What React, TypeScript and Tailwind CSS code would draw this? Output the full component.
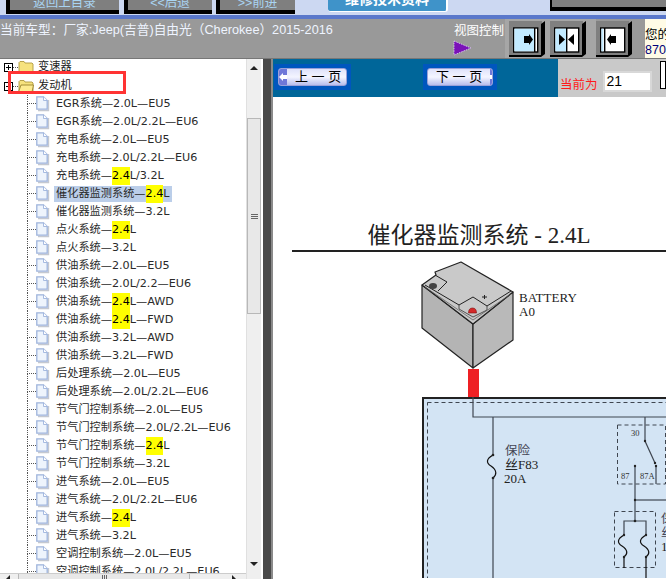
const cjk = { fontFamily: '"DejaVu Sans", "Noto Sans CJK SC", sans-serif' }
const arial = { fontFamily: '"Liberation Sans", "Noto Sans CJK SC", sans-serif' }

const rows = [
  'EGR系统—2.0L—EU5',
  'EGR系统—2.0L/2.2L—EU6',
  '充电系统—2.0L—EU5',
  '充电系统—2.0L/2.2L—EU6',
  '充电系统—2.4L/3.2L',
  '催化器监测系统—2.4L',
  '催化器监测系统—3.2L',
  '点火系统—2.4L',
  '点火系统—3.2L',
  '供油系统—2.0L—EU5',
  '供油系统—2.0L/2.2—EU6',
  '供油系统—2.4L—AWD',
  '供油系统—2.4L—FWD',
  '供油系统—3.2L—AWD',
  '供油系统—3.2L—FWD',
  '后处理系统—2.0L—EU5',
  '后处理系统—2.0L/2.2L—EU6',
  '节气门控制系统—2.0L—EU5',
  '节气门控制系统—2.0L/2.2L—EU6',
  '节气门控制系统—2.4L',
  '节气门控制系统—3.2L',
  '进气系统—2.0L—EU5',
  '进气系统—2.0L/2.2L—EU6',
  '进气系统—2.4L',
  '进气系统—3.2L',
  '空调控制系统—2.0L—EU5',
  '空调控制系统—2.0L/2.2L—EU6',
]

function TopButton({ label, width, ml }: { label: string; width: string; ml: string }) {
  return (
    <div className={`${width} ${ml} h-[14px] bg-[#7f7f7f] border-l-4 border-b-4 border-black overflow-hidden flex items-end justify-center`}>
      <span className="text-[12.5px] leading-[13px] text-[#a9d4f2] whitespace-nowrap" style={arial}>{label}</span>
    </div>
  )
}

function ViewButton({ blue, bar, children }: { blue: number; bar: number; children: React.ReactNode }) {
  return (
    <svg width="36" height="36" viewBox="0 0 36 36" className="shrink-0">
      <rect x="0" y="0" width="33" height="34" fill="#808080" />
      <polygon points="32,3 36,0 36,33 32,36 0,36 0,34 32,34" fill="#000" />
      <rect x="4.700" y="7" width="24" height="24" fill="#fff" stroke="#000" strokeWidth="1.400" />
      <rect x="5.400" y="7.700" width={blue} height="22.600" fill="#c2eaff" />
      <rect x={bar} y="7" width="1.400" height="24" fill="#000" />
      {children}
    </svg>
  )
}

function Folder({ open }: { open?: boolean }) {
  return (
    <svg width="16" height="13" viewBox="0 0 16 13" className="shrink-0">
      <path d="M1 3 L1 1.500 L2 .5 L6 .5 L7 2 L14 2 L15 3 L15 12 L1 12 Z" fill="#f6e27e" stroke="#b09a40" strokeWidth=".9" />
      {open && <path d="M.5 12 L3 5 L15.500 5 L14 12 Z" fill="#fdeb90" stroke="#9a8530" strokeWidth=".9" />}
    </svg>
  )
}

function DocIcon() {
  return (
    <svg width="14" height="16" viewBox="0 0 14 16" className="shrink-0">
      <path d="M2 14.500 L12.500 14.500 L12.500 4" fill="none" stroke="#c4c8d0" strokeWidth="1.400" />
      <path d="M.8 .8 L7.500 .8 L11.200 4.500 L11.200 13.200 L.8 13.200 Z" fill="#eef4fc" stroke="#9db3dc" strokeWidth="1.300" />
      <path d="M7.500 .8 L7.500 4.500 L11.200 4.500" fill="#ffffff" stroke="#9db3dc" strokeWidth=".9" />
    </svg>
  )
}

function RowLabel({ text, selected }: { text: string; selected: boolean }) {
  const i = text.indexOf('2.4')
  return (
    <div className={`h-[16px] flex items-center px-[2px] ml-[4px] whitespace-nowrap text-[11.2px] text-[#2a2a2a] ${selected ? 'bg-[#bbcee9]' : ''}`} style={cjk}>
      {i < 0 ? text : (
        <>
          {text.slice(0, i)}
          <span className="bg-[#ffff00] text-black h-[18px] leading-[18px]">2.4</span>
          {text.slice(i + 3)}
        </>
      )}
    </div>
  )
}

function Tree() {
  return (
    <div className="flex-1 min-w-0 overflow-hidden -mt-[1px]">
      <div className="h-[19px] flex items-center pl-[4px]">
        <div className="w-[9px] h-[9px] border border-black flex items-center justify-center text-[9px] leading-none bg-white">
          <div className="w-[5px] h-[1px] bg-black relative">
            <div className="w-[1px] h-[5px] bg-black absolute left-[2px] -top-[2px]" />
          </div>
        </div>
        <div className="w-[5px] border-t border-dotted border-[#555]" />
        <Folder />
        <span className="ml-[4px] text-[11.2px] text-[#222]" style={cjk}>变速器</span>
      </div>
      <div className="h-[18px] flex items-center pl-[4px]">
        <div className="w-[9px] h-[9px] border border-black flex items-center justify-center bg-white">
          <div className="w-[5px] h-[1px] bg-black" />
        </div>
        <div className="w-[5px] border-t border-dotted border-[#555]" />
        <Folder open />
        <span className="ml-[4px] text-[11.2px] text-[#222]" style={cjk}>发动机</span>
      </div>
      {rows.map((r, n) => (
        <div key={n} className="h-[18px] flex items-center pl-[27px]">
          <div className="w-[9px] h-[18px] flex flex-col shrink-0">
            <div className="h-[9px] border-l border-b border-dotted border-[#555]" />
            <div className="h-[9px] border-l border-dotted border-[#555]" />
          </div>
          <DocIcon />
          <RowLabel text={r} selected={n === 5} />
        </div>
      ))}
    </div>
  )
}

function TreeScrollbars() {
  return (
    <div className="w-[15px] shrink-0 mr-[2px] bg-[#efefef] flex flex-col items-center border-l border-[#e0e0e0]">
      <div className="h-[15px] pt-[7px]">
        <div className="w-0 h-0 border-x-[4px] border-x-transparent border-b-[4px] border-b-[#222]" />
      </div>
      <div className="mt-[44px] w-[14px] h-[196px] bg-[#e8e8e8] border border-[#b8b8b8] flex flex-col items-center justify-center gap-[1px]">
        <div className="w-[7px] h-[1px] bg-[#666]" />
        <div className="w-[7px] h-[1px] bg-[#666]" />
        <div className="w-[7px] h-[1px] bg-[#666]" />
      </div>
      <div className="flex-1" />
      <div className="h-[17px]">
        <div className="w-0 h-0 border-x-[4px] border-x-transparent border-t-[4px] border-t-[#222]" />
      </div>
    </div>
  )
}

function PageButton({ label, dir }: { label: string; dir: 'prev' | 'next' }) {
  const arrow = (
    <div className="w-[10px] self-stretch bg-[#6f78d8] flex items-center justify-center text-white text-[9px]">
      <svg width="8" height="8" viewBox="0 0 8 8">
        <path d={dir === 'prev' ? 'M0 4 L4 0 L4 2 L8 2 L8 6 L4 6 L4 8 Z' : 'M8 4 L4 0 L4 2 L0 2 L0 6 L4 6 L4 8 Z'} fill="#fff" />
      </svg>
    </div>
  )
  return (
    <div className="h-[26px] px-[4px] py-[4px] bg-[#0056be] flex">
      <div className="flex-1 rounded-[3px] border border-[#9aa0d8] overflow-hidden flex items-center bg-gradient-to-b from-[#dfe2fa] via-[#f4f5ff] to-[#b9bdec]">
        {dir === 'prev' && arrow}
        <span className="flex-1 text-center text-[13px] text-black whitespace-nowrap px-[8px]" style={arial}>{label}</span>
        {dir === 'next' && arrow}
      </div>
    </div>
  )
}

function Circuit() {
  const stroke = '#3f4650'
  const dash = { stroke: '#3f4650', strokeWidth: 1, strokeDasharray: '4 3', fill: 'none' }
  const serif = '"Liberation Serif", "Noto Sans CJK SC", serif'
  return (
    <svg width="374" height="326" viewBox="292 253 374 326" className="block">
      {/* battery */}
      <polygon points="422,286 473,325 473,369 422,329" fill="#b4b4b4" stroke="#222" strokeWidth="1.200" strokeLinejoin="round" />
      <polygon points="513,293 473,325 473,369 513,341" fill="#b9b9b9" stroke="#222" strokeWidth="1.200" strokeLinejoin="round" />
      <polygon points="422,286 436,276 435,273 461,263 513,293 473,325" fill="#c9c9c9" stroke="#222" strokeWidth="1.200" strokeLinejoin="round" />
      <path d="M425,286 L459,306 L473,298 L487,307 L511,292" fill="none" stroke="#222" strokeWidth="1" />
      <path d="M459,306 L459,310 L473,318 L487,311 L487,307" fill="none" stroke="#444" strokeWidth=".9" />
      <path d="M425,288 L473,321 L511,295" fill="none" stroke="#555" strokeWidth=".7" />
      <path d="M435,276 L447,283 L438,292" fill="none" stroke="#222" strokeWidth="1" />
      <ellipse cx="433" cy="287" rx="4" ry="3" fill="#444" />
      <path d="M468.500,314 Q468.500,309 472.500,309 Q476.500,309 476.500,314 Z" fill="#d42a2a" stroke="#7a1010" strokeWidth=".6" />
      <path d="M482,298 L487,298 M484.500,296 L484.500,300" stroke="#222" strokeWidth="1" />
      <text x="519" y="303" fontFamily={serif} fontSize="13" fill="#222">BATTERY</text>
      <text x="519" y="317" fontFamily={serif} fontSize="13" fill="#222">A0</text>
      <rect x="468" y="370" width="11" height="28" fill="#ee2024" />

      {/* module box */}
      <rect x="423" y="399" width="260" height="200" fill="#d3e4f4" stroke="#222" strokeWidth="2" />
      <rect x="427.500" y="403.500" width="260" height="200" {...dash} />
      <path d="M473,398 L473,418 L666,418" fill="none" stroke={stroke} strokeWidth="1.200" />

      {/* fuse F83 */}
      <path d="M493,418 L493,456" fill="none" stroke={stroke} strokeWidth="1.200" />
      <path d="M493,456 C486,460 486,464 491,467 C497,471 497,476 493,479" fill="none" stroke="#111" strokeWidth="1.200" />
      <path d="M493,479 L493,579" fill="none" stroke={stroke} strokeWidth="1.200" />
      <circle cx="493" cy="456" r="1.300" fill="#222" />
      <circle cx="493" cy="479" r="1.300" fill="#222" />
      <text x="505" y="456" fontFamily={serif} fontSize="12.500" fill="#445">保险</text>
      <text x="505" y="470" fontFamily={serif} fontSize="13" fill="#222">丝F83</text>
      <text x="504" y="484" fontFamily={serif} fontSize="13" fill="#222">20A</text>

      {/* relay */}
      <rect x="617.500" y="426" width="48" height="59" {...dash} />
      <text x="631" y="437" fontFamily={serif} fontSize="8.500" fill="#333">30</text>
      <text x="621" y="480" fontFamily={serif} fontSize="8.500" fill="#333">87</text>
      <text x="640" y="480" fontFamily={serif} fontSize="8.500" fill="#333">87A</text>
      <path d="M645,418 L645,442 L655,464" fill="none" stroke={stroke} strokeWidth="1.200" />
      <path d="M656,467 L656,485" fill="none" stroke={stroke} strokeWidth="1.200" />
      <circle cx="645" cy="442" r="1.200" fill="#222" />
      <circle cx="655" cy="464" r="1.200" fill="#222" />
      <circle cx="656" cy="467" r="1.200" fill="#222" />
      <path d="M635,467 L635,522" fill="none" stroke={stroke} strokeWidth="1.200" />
      <circle cx="635" cy="467" r="1.200" fill="#222" />
      <path d="M635,501 L666,501" fill="none" stroke={stroke} strokeWidth="1.200" />
      <circle cx="635" cy="501" r="1.200" fill="#222" />

      {/* twin fuses */}
      <rect x="614.500" y="512.500" width="41" height="56" {...dash} />
      <path d="M624,536 L624,522 L646,522 L646,536" fill="none" stroke={stroke} strokeWidth="1.200" />
      <circle cx="635" cy="522" r="1.300" fill="#222" />
      <path d="M624,536 C617,540 617,544 622,547 C628,551 628,555 624,558 L624,569" fill="none" stroke="#111" strokeWidth="1.200" />
      <path d="M646,536 C639,540 639,544 644,547 C650,551 650,555 646,558 L646,579" fill="none" stroke="#111" strokeWidth="1.200" />
      <circle cx="624" cy="536" r="1.200" fill="#222" />
      <circle cx="646" cy="536" r="1.200" fill="#222" />
      <circle cx="624" cy="558" r="1.200" fill="#222" />
      <circle cx="646" cy="558" r="1.200" fill="#222" />
      <text x="661" y="524" fontFamily={serif} fontSize="12.500" fill="#445">保</text>
      <text x="661" y="538" fontFamily={serif} fontSize="12.500" fill="#445">丝</text>
      <text x="661" y="552" fontFamily={serif} fontSize="13" fill="#222">1</text>
    </svg>
  )
}

export default function App() {
  return (
    <div className="w-[666px] h-[579px] overflow-hidden bg-white flex flex-col relative" style={arial}>
      {/* top nav */}
      <div className="h-[15px] shrink-0 bg-[#ccd8f2] flex items-start">
        <TopButton label="返回上目录" width="w-[113px]" ml="ml-[6px]" />
        <TopButton label="<<后退" width="w-[88px]" ml="ml-[5px]" />
        <TopButton label=">>前进" width="w-[79px]" ml="ml-[4px]" />
        <div className="w-[120px] h-[12px] ml-[33px] bg-[#3f93c9] rounded-b-[3px] border-r-2 border-b border-white overflow-hidden">
          <div className="-mt-[9px] text-center text-[14px] leading-[16px] text-white font-bold whitespace-nowrap">维修技术资料</div>
        </div>
        <div className="w-[116px] h-[11px] ml-[102px] bg-[#7f7f7f] border-l-2 border-b-4 border-black" />
      </div>
      <div className="h-[4px] shrink-0 bg-[#5a78cb]" />

      {/* model / view controls */}
      <div className="h-[40px] shrink-0 bg-[#999999] flex border-b border-[#777]">
        <div className="w-[454px] shrink-0 pt-[1px] text-[12.7px] leading-[20px] text-[#eef4ff] whitespace-nowrap overflow-hidden">
          当前车型：厂家:Jeep(吉普)自由光（Cherokee）2015-2016
        </div>
        <div className="w-[51px] shrink-0 flex flex-col">
          <span className="text-[12.5px] leading-[16px] mt-[4px] text-white whitespace-nowrap">视图控制</span>
          <svg width="20" height="16" viewBox="0 0 20 16" className="mt-[1px] -ml-[1px]">
            <polygon points="1,1 18,8 1,15" fill="#7a12b8" stroke="#e8d8ff" strokeWidth=".8" strokeDasharray="1.500 1" />
          </svg>
        </div>
        <div className="w-[91px] shrink-0 bg-[#a6a6a6] flex pl-[4px] pt-[2px] gap-[10px]">
          <ViewButton blue={20} bar={25}>
            <polygon points="15,15 20,15 20,13 24,18.500 20,24 20,22 15,22" fill="#000" />
          </ViewButton>
          <div className="-ml-[5px] flex gap-[5px]">
            <ViewButton blue={11} bar={16}>
              <polygon points="9,13 9,24 15,18.500" fill="#000" />
              <polygon points="24,13 24,24 18,18.500" fill="#000" />
            </ViewButton>
          </div>
        </div>
        <div className="shrink-0 pt-[2px] w-[49px] flex">
          <ViewButton blue={2} bar={8}>
            <polygon points="20,15 15,15 15,13 11,18.500 15,24 15,22 20,22" fill="#000" />
          </ViewButton>
        </div>
        <div className="flex-1 bg-[#fffbe6] overflow-hidden pt-[9px] text-[12.5px] leading-[15px] text-black whitespace-nowrap">
          <div>您的</div>
          <div className="text-[#00007a]">870</div>
        </div>
      </div>

      {/* body */}
      <div className="flex-1 min-h-0 flex">
        {/* tree */}
        <div className="w-[263px] shrink-0 flex bg-white relative overflow-hidden">
          <Tree />
          <TreeScrollbars />
          <div className="absolute left-0 bottom-0 w-[246px] h-[6px] bg-[#efefef] border-t border-[#ccc] flex items-start">
            <div className="ml-[6px] mt-[1px] w-0 h-0 border-y-[4px] border-y-transparent border-r-[4px] border-r-[#222]" />
            <div className="ml-[8px] w-[172px] h-full bg-[#e8e8e8] border-x border-[#b8b8b8] flex justify-center gap-[1px] pt-[1px]">
              <div className="w-[1px] h-[5px] bg-[#666]" />
              <div className="w-[1px] h-[5px] bg-[#666]" />
              <div className="w-[1px] h-[5px] bg-[#666]" />
            </div>
            <div className="ml-[42px] mt-[1px] w-0 h-0 border-y-[4px] border-y-transparent border-l-[4px] border-l-[#222]" />
          </div>
          <div className="absolute left-[8px] top-[12px] w-[118px] h-[23px] border-[3px] border-[#ff3333]" />
        </div>
        <div className="w-[8px] shrink-0 bg-[#4a4a4a]" />
        <div className="w-[2px] shrink-0 bg-[#8a8a8a]" />

        {/* document */}
        <div className="flex-1 min-w-0 flex flex-col bg-white">
          <div className="h-[38px] shrink-0 bg-[#006699] flex">
            <div className="flex-1 flex items-start pt-[5px] pl-[1px]">
              <div className="w-[77px]"><PageButton label="上 一 页" dir="prev" /></div>
              <div className="w-[74px] ml-[72px]"><PageButton label="下 一 页" dir="next" /></div>
            </div>
            <div className="w-[108px] shrink-0 bg-[#c9c9c9] flex pl-[2px]">
              <span className="mt-[16px] text-[12.5px] leading-[20px] text-[#ff1a1a] whitespace-nowrap">当前为</span>
              <div className="mt-[12px] ml-[5px] w-[53px] h-[21px] bg-white border-2 border-[#d8d8d8] text-[14px] leading-[17px] pl-[2px] text-black">21</div>
              <div className="mt-[2px] ml-[8px] w-[6px] h-[28px] bg-white border border-black" />
            </div>
          </div>
          <div className="flex-1 min-h-0 overflow-hidden pl-[19px]">
            <h2 className="mt-[125px] h-[30px] w-[374px] text-center text-[23px] leading-[27px] text-[#222] border-b-2 border-[#222] whitespace-nowrap" style={{ fontFamily: '"Liberation Serif", "Noto Sans CJK SC", serif' }}>
              催化器监测系统 - 2.4L
            </h2>
            <Circuit />
          </div>
        </div>
      </div>
    </div>
  )
}
